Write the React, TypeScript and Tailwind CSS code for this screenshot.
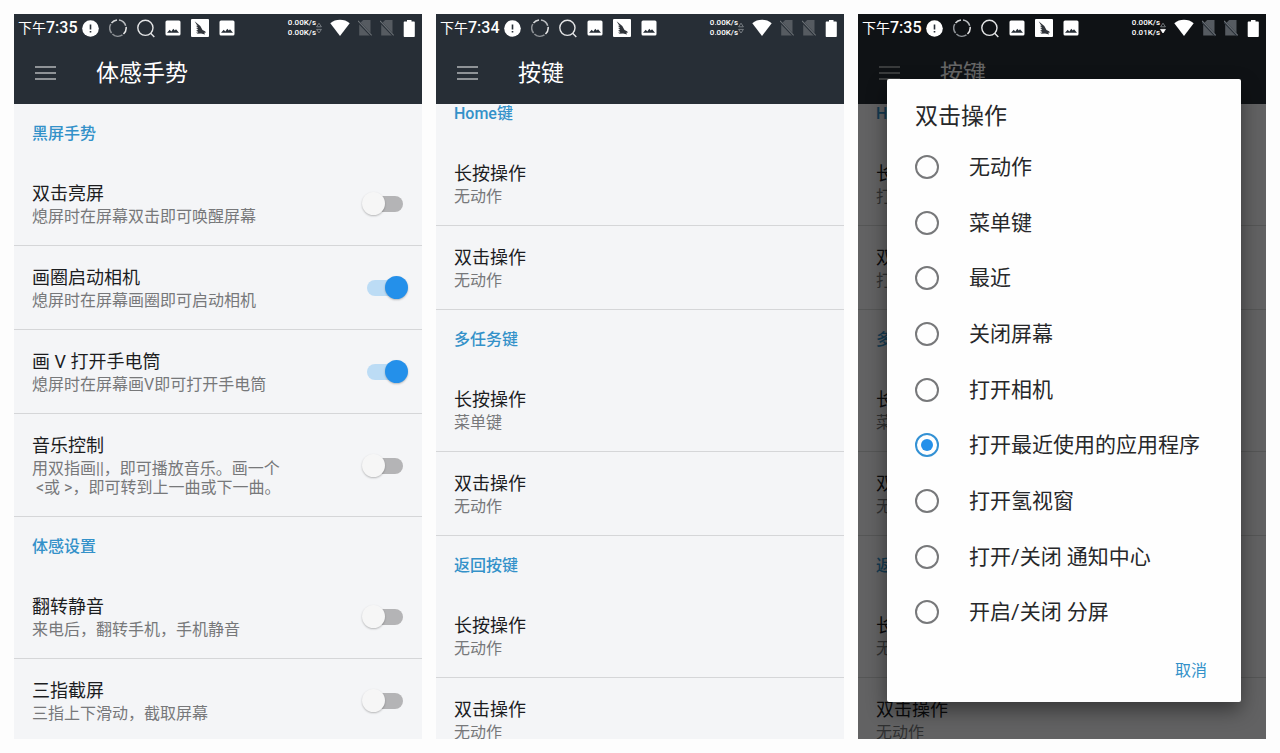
import { useState } from "react";
import type { ReactNode } from "react";

type GestureItem = { id: string; title: string; summary: string; on: boolean };
type GestureSection = { heading: string; items: GestureItem[] };
type KeySection = { heading: string; longPress: string; doubleTap: string };

const gestureSections: GestureSection[] = [
  {
    heading: "黑屏手势",
    items: [
      { id: "wake", title: "双击亮屏", summary: "熄屏时在屏幕双击即可唤醒屏幕", on: false },
      { id: "camera", title: "画圈启动相机", summary: "熄屏时在屏幕画圈即可启动相机", on: true },
      { id: "torch", title: "画 V 打开手电筒", summary: "熄屏时在屏幕画V即可打开手电筒", on: true },
      { id: "music", title: "音乐控制", summary: "用双指画||，即可播放音乐。画一个\n <或 >，即可转到上一曲或下一曲。", on: false },
    ],
  },
  {
    heading: "体感设置",
    items: [
      { id: "flip", title: "翻转静音", summary: "来电后，翻转手机，手机静音", on: false },
      { id: "shot", title: "三指截屏", summary: "三指上下滑动，截取屏幕", on: false },
    ],
  },
];

const keySections: KeySection[] = [
  { heading: "Home键", longPress: "无动作", doubleTap: "无动作" },
  { heading: "多任务键", longPress: "菜单键", doubleTap: "无动作" },
  { heading: "返回按键", longPress: "无动作", doubleTap: "无动作" },
];

const customKeySections: KeySection[] = [
  { heading: "Home键", longPress: "打开相机", doubleTap: "打开相机" },
  { heading: "多任务键", longPress: "菜单键", doubleTap: "无动作" },
  { heading: "返回按键", longPress: "无动作", doubleTap: "无动作" },
];

const actions = [
  "无动作",
  "菜单键",
  "最近",
  "关闭屏幕",
  "打开相机",
  "打开最近使用的应用程序",
  "打开氢视窗",
  "打开/关闭 通知中心",
  "开启/关闭 分屏",
];

function ImageIcon() {
  return (
    <svg width="16" height="16" viewBox="0 0 16 16">
      <rect x="0.5" y="0.5" width="15" height="15" rx="1.5" fill="#fff" />
      <path d="M2 12.800 4.700 9.700l1.600 1.700 2-2.700 1.500 1.900 1.200-1.300 3 3.500z" fill="#272e36" />
    </svg>
  );
}

function SimOffIcon() {
  return (
    <svg width="14" height="18" viewBox="0 0 14 18">
      <path d="M5.200 1h7.300v15.500H1.200V5z" fill="#565b61" />
      <path d="m0 2.600 13.500 14" stroke="#272e36" strokeWidth="2.400" />
      <path d="m0 1.800 13.700 14.600" stroke="#6d7277" strokeWidth="1.100" />
    </svg>
  );
}

function StatusBar({ time, down, active }: { time: string; down: string; active?: boolean }) {
  return (
    <div className="relative z-20 flex h-7 items-center justify-between pr-1.5 pl-1 text-white">
      <div className="flex items-center gap-1">
        <span className="flex items-center text-base leading-5 font-medium">
          <span className="text-sm font-normal">下午</span>
          {time}
        </span>
        <div className="flex items-center gap-2.5">
          <svg width="17" height="17" viewBox="0 0 17 17">
            <circle cx="8.5" cy="8.5" r="8.3" fill="#fff" />
            <path d="M8.5 4.600v4.800M8.5 11v1.600" stroke="#272e36" strokeWidth="1.600" />
          </svg>
          <svg width="18" height="18" viewBox="0 0 18 18" fill="none" strokeWidth="1.500">
            <path d="M10 .9a8.200 8.200 0 0 1 6.700 5.800" stroke="#b9bcbf" />
            <path d="M17.100 7.800a8.200 8.200 0 0 1-2.600 7.200" stroke="#e8e8e8" />
            <path d="M13.500 15.900A8.200 8.200 0 0 1 3.400 15" stroke="#8e9296" />
            <path d="M2.600 14.100A8.200 8.200 0 0 1 1.800 5" stroke="#8e9296" />
            <path d="M2.500 4A8.200 8.200 0 0 1 8 .9" stroke="#d4d6d8" />
          </svg>
          <svg width="18" height="19" viewBox="0 0 18 19" fill="none" stroke="#e4e5e6" strokeWidth="1.400">
            <circle cx="8.4" cy="8.800" r="7.600" />
            <path d="m13.700 14.300 3.600 3.600" />
          </svg>
          <ImageIcon />
          <svg width="18" height="18" viewBox="0 0 18 18">
            <rect width="18" height="18" rx="1" fill="#fff" />
            <path d="M3.600 2.200 9.300 7l2.200 4 2.500 1.200 1 1.300-1.800.2.900 1.800-4-.9-4.500.1 1.800-1.100-2.600-.3 2.300-1-2.200-1.300 2.300-.1-2.200-2.200 2.200.6L4.800 6.500l1.900.7z" fill="#30343a" />
          </svg>
          <ImageIcon />
        </div>
      </div>
      <div className="flex items-center gap-2">
        <div className="flex items-center">
          <span className="flex flex-col text-[8px] leading-[10px] font-medium">
            <span>0.00K/s</span>
            <span>{down}</span>
          </span>
          <svg width="6" height="14" viewBox="0 0 6 14" fill="none" stroke="#8a8f94" strokeWidth="0.800">
            <path d="M3 2.200 5.400 5.800H.6z" />
            <path d="M3 12 .6 8.400h4.800z" fill={active ? "#fff" : "none"} stroke={active ? "#fff" : "#8a8f94"} />
          </svg>
        </div>
        <svg width="20" height="18" viewBox="0 0 20 18">
          <path d="M10 17 .300 4.200C3 1.900 6.300.8 10 .8s7 1.100 9.700 3.400z" fill="#fff" />
        </svg>
        <SimOffIcon />
        <SimOffIcon />
        <svg width="14" height="17" viewBox="0 0 14 17">
          <path d="M5 0h4.500v1.500h2.300c.6 0 1 .4 1 1V16c0 .6-.4 1-1 1H2.700c-.6 0-1-.4-1-1V2.500c0-.6.4-1 1-1H5z" fill="#fff" />
        </svg>
      </div>
    </div>
  );
}

type ScreenProps = { title: string; time: string; down?: string; active?: boolean; children: ReactNode };

function Screen({ title, time, down = "0.00K/s", active, children }: ScreenProps) {
  return (
    <section className="relative flex min-w-0 flex-col overflow-hidden bg-[#f4f5f7]">
      <header className="bg-[#272e36]">
        <StatusBar time={time} down={down} active={active} />
        <div className="flex h-[62px] items-center gap-10 pl-[21px]">
          <button aria-label="菜单" className="flex w-[21px] flex-col gap-1">
            <span className="h-0.5 bg-[#8f9397]" />
            <span className="h-0.5 bg-[#8f9397]" />
            <span className="h-0.5 bg-[#8f9397]" />
          </button>
          <h1 className="pt-0.5 text-[23px] leading-8 text-white">{title}</h1>
        </div>
      </header>
      {children}
    </section>
  );
}

function SectionHeading({ children }: { children: ReactNode }) {
  return <h2 className="flex h-[58px] shrink-0 items-center px-[18px] pt-0.5 text-base leading-5 font-medium text-[#3391c9]">{children}</h2>;
}

function RowText({ title, summary }: { title: string; summary: string }) {
  return (
    <span className="flex min-w-0 flex-col gap-px">
      <span className="text-lg leading-6 text-[#1c1d1f]">{title}</span>
      <span className="text-base leading-[19px] whitespace-pre-wrap text-[#77787a]">{summary}</span>
    </span>
  );
}

function GestureRow({ item }: { item: GestureItem }) {
  const [on, setOn] = useState(item.on);
  return (
    <label htmlFor={item.id} className="flex items-center justify-between border-b border-[#d5d6d8] pt-5 pr-3.5 pb-[19px] pl-[18px]">
      <RowText title={item.title} summary={item.summary} />
      <input
        id={item.id}
        type="checkbox"
        checked={on}
        onChange={(e) => setOn(e.target.checked)}
        className="relative h-6 w-[46px] shrink-0 appearance-none before:absolute before:inset-x-[5px] before:inset-y-1 before:rounded-full before:bg-[#b4b4b6] before:content-[''] after:absolute after:top-0 after:left-0 after:size-[23px] after:rounded-full after:bg-[#f6f6f6] after:shadow-[0_1px_2px_rgba(0,0,0,0.25)] after:content-[''] checked:before:bg-[#bcdcf5] checked:after:left-[23px] checked:after:bg-[#2490ea]"
      />
    </label>
  );
}

function KeyRow({ title, summary }: { title: string; summary: string }) {
  return (
    <button className="flex w-full items-center border-b border-[#d5d6d8] px-[18px] pt-5 pb-[19px] text-left">
      <RowText title={title} summary={summary} />
    </button>
  );
}

function KeyList({ sections }: { sections: KeySection[] }) {
  return (
    <div className="min-h-0 flex-1 overflow-hidden">
      {/* the list rests slightly scrolled under the app bar */}
      <div className="-mt-5">
        {sections.map((section) => (
          <div key={section.heading}>
            <SectionHeading>{section.heading}</SectionHeading>
            <KeyRow title="长按操作" summary={section.longPress} />
            <KeyRow title="双击操作" summary={section.doubleTap} />
          </div>
        ))}
      </div>
    </div>
  );
}

function ActionDialog() {
  const [selected, setSelected] = useState("打开最近使用的应用程序");
  return (
    <div className="absolute inset-0 z-10 bg-black/60">
      <div
        role="dialog"
        aria-label="双击操作"
        className="absolute top-[65px] right-[25px] bottom-[37px] left-[29px] flex flex-col rounded-xs bg-[#fefefe] px-7 shadow-[0_8px_20px_rgba(0,0,0,0.45)]"
      >
        <h2 className="pt-[22px] pb-1.5 text-[23px] leading-8 text-[#27282a]">双击操作</h2>
        <div role="radiogroup" className="flex min-h-0 flex-1 flex-col">
          {actions.map((action) => (
            <label key={action} className="flex flex-1 items-center gap-[30px] text-[21px] leading-7 text-[#27282a]">
              <input
                type="radio"
                name="double-tap"
                checked={selected === action}
                onChange={() => setSelected(action)}
                className="flex size-6 shrink-0 appearance-none items-center justify-center rounded-full border-2 border-[#77787a] before:size-3 before:rounded-full before:content-[''] checked:border-[#3391d4] checked:before:bg-[#2490ea]"
              />
              {action}
            </label>
          ))}
        </div>
        <div className="flex h-[62px] items-center justify-end pr-1.5">
          <button className="text-base leading-5 text-[#3391c9]">取消</button>
        </div>
      </div>
    </div>
  );
}

export default function App() {
  return (
    <main className="grid h-screen grid-cols-3 gap-3.5 overflow-hidden bg-[#fdfdfd] p-3.5 font-['Roboto','Noto_Sans_CJK_SC',sans-serif]">
      <Screen title="体感手势" time="7:35">
        <div className="min-h-0 flex-1 overflow-hidden">
          {gestureSections.map((section) => (
            <div key={section.heading}>
              <SectionHeading>{section.heading}</SectionHeading>
              {section.items.map((item) => (
                <GestureRow key={item.id} item={item} />
              ))}
            </div>
          ))}
        </div>
      </Screen>
      <Screen title="按键" time="7:34">
        <KeyList sections={keySections} />
      </Screen>
      <Screen title="按键" time="7:35" down="0.01K/s" active>
        <KeyList sections={customKeySections} />
        <ActionDialog />
      </Screen>
    </main>
  );
}
